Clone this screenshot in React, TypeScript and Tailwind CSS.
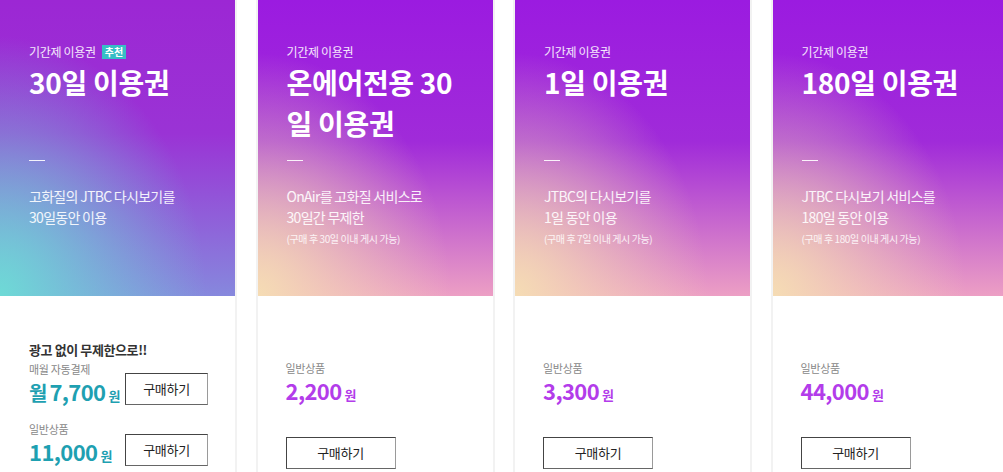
import React from "react";

const font = "font-['Noto_Sans_CJK_KR','Noto_Sans',sans-serif]";

const pinkBg =
  "bg-[radial-gradient(ellipse_at_0%_100%,#f5dcb4_0%,rgba(245,220,180,0)_58%),linear-gradient(180deg,#9b1be0_0%,#a02bd9_48%,#ec9fc4_100%)]";
const tealBg =
  "bg-[radial-gradient(ellipse_at_0%_100%,#6edad6_0%,rgba(110,218,214,0)_62%),linear-gradient(180deg,#9c27d4_0%,#9a33d5_45%,#8688dd_100%)]";

type Plan = {
  title: React.ReactNode;
  desc: string[];
  note?: string;
  price: string;
};

const plans: Plan[] = [
  {
    title: (
      <>
        온에어전용 30
        <br />일 이용권
      </>
    ),
    desc: ["OnAir를 고화질 서비스로", "30일간 무제한"],
    note: "(구매 후 30일 이내 게시 가능)",
    price: "2,200",
  },
  {
    title: "1일 이용권",
    desc: ["JTBC의 다시보기를", "1일 동안 이용"],
    note: "(구매 후 7일 이내 게시 가능)",
    price: "3,300",
  },
  {
    title: "180일 이용권",
    desc: ["JTBC 다시보기 서비스를", "180일 동안 이용"],
    note: "(구매 후 180일 이내 게시 가능)",
    price: "44,000",
  },
];

function BuyButton({ wide }: { wide?: boolean }) {
  return (
    <button
      className={`${wide ? "w-[110px]" : "w-[83px]"} h-[32px] border border-[#444] border-r-[#9a9a9a] border-b-[#666] bg-white text-[13px] text-[#222] tracking-[-0.3px]`}
    >
      구매하기
    </button>
  );
}

function Price({ value, color, prefix }: { value: string; color: string; prefix?: string }) {
  return (
    <div className={`flex items-baseline h-[28px] leading-[28px] font-bold ${color}`}>
      {prefix && <span className="text-[20px] mr-[2px]">{prefix}</span>}
      <span className="text-[22px] tracking-[-0.6px]">{value}</span>
      <span className="text-[13px] ml-[3px]">원</span>
    </div>
  );
}

function Top({
  bg,
  badge,
  title,
  desc,
  note,
}: {
  bg: string;
  badge?: boolean;
  title: React.ReactNode;
  desc: string[];
  note?: string;
}) {
  return (
    <div className={`h-[296px] ${bg} pl-[29px] pt-[44px] text-white`}>
      <div className="flex items-center gap-[6px] h-[16px]">
        <span className="text-[12px] leading-4 text-white/90 tracking-[-0.3px]">기간제 이용권</span>
        {badge && (
          <span className="bg-[#36bec6] px-[3px] h-[14px] leading-[14px] text-[10px] font-bold text-white">
            추천
          </span>
        )}
      </div>
      <div className="mt-[2px] h-[82px] text-[28px] leading-[41px] font-bold tracking-[-0.3px]">
        {title}
      </div>
      <div className="mt-[16px] w-[16px] h-px bg-white/90" />
      <div className="mt-[25px] text-[14px] leading-[21px] text-white/90 tracking-[-0.7px]">
        {desc.map((d) => (
          <div key={d}>{d}</div>
        ))}
      </div>
      {note && (
        <div className="mt-[3px] text-[10px] leading-4 text-white/85 tracking-[-0.4px]">{note}</div>
      )}
    </div>
  );
}

export default function App() {
  return (
    <div className={`${font} h-[472px] w-[1003px] overflow-hidden bg-white`}>
      <div className="flex gap-[18.5px] ml-[-2px] h-full">
        <div className="w-[239px] shrink-0 h-full border-x-2 border-[#f2f2f2] bg-white">
          <Top
            bg={tealBg}
            badge
            title="30일 이용권"
            desc={["고화질의 JTBC 다시보기를", "30일동안 이용"]}
          />
          <div className="pl-[29px] pt-[45px]">
            <div className="text-[13px] leading-[18px] font-bold text-[#333] tracking-[-0.4px]">
              광고 없이 무제한으로!!
            </div>
            <div className="flex items-start mt-[2px]">
              <div className="w-[96px] shrink-0">
                <div className="text-[11px] leading-4 text-[#888] tracking-[-0.3px]">매월 자동결제</div>
                <Price value="7,700" prefix="월" color="text-[#1ea0b1]" />
              </div>
              <div className="mt-[12px]">
                <BuyButton />
              </div>
            </div>
            <div className="flex items-start mt-[16px]">
              <div className="w-[96px] shrink-0">
                <div className="text-[11px] leading-4 text-[#888] tracking-[-0.3px]">일반상품</div>
                <Price value="11,000" color="text-[#1ea0b1]" />
              </div>
              <div className="mt-[13px]">
                <BuyButton />
              </div>
            </div>
          </div>
        </div>

        {plans.map((p, i) => (
          <div key={i} className="w-[239px] shrink-0 h-full border-x-2 border-[#f2f2f2] bg-white">
            <Top bg={pinkBg} title={p.title} desc={p.desc} note={p.note} />
            <div className="pl-[28px] pt-[64px]">
              <div className="text-[11px] leading-4 text-[#888] tracking-[-0.3px]">일반상품</div>
              <Price value={p.price} color="text-[#b33cea]" />
              <div className="mt-[33px]">
                <BuyButton wide />
              </div>
            </div>
          </div>
        ))}
      </div>
    </div>
  );
}
